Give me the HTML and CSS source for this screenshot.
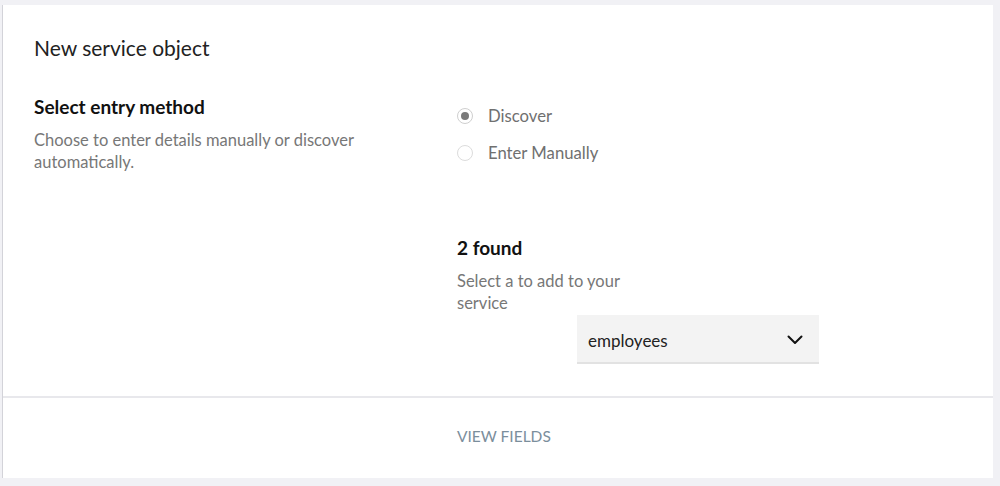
FILE: index.html
```html
<!DOCTYPE html>
<html>
<head>
<meta charset="utf-8">
<link rel="stylesheet" href="styles.css">
</head>
<body>
<div class="page">
  <div class="card">
    <div class="main">
      <h1 class="title">New service object</h1>
      <div class="grid">
        <div class="left">
          <h2 class="heading">Select entry method</h2>
          <p class="desc">Choose to enter details manually or discover automatically.</p>
        </div>
        <div class="right">
          <div class="radios">
            <label class="radio"><span class="dot checked"></span><span class="rlabel">Discover</span></label>
            <label class="radio"><span class="dot"></span><span class="rlabel">Enter Manually</span></label>
          </div>
          <h2 class="heading found">2 found</h2>
          <p class="desc narrow">Select a to add to your service</p>
          <div class="select">
            <span class="value">employees</span>
            <svg class="chev" width="16" height="10" viewBox="0 0 16 10"><path d="M1.5 1.5 L8 8 L14.5 1.5" fill="none" stroke="#111" stroke-width="2" stroke-linecap="round" stroke-linejoin="round"/></svg>
          </div>
        </div>
      </div>
    </div>
    <div class="footer">
      <span class="link">VIEW FIELDS</span>
    </div>
  </div>
</div>
</body>
</html>
```

FILE: styles.css
```css
html, body {
  margin: 0;
  padding: 0;
  background: #f1f1f5;
}
body {
  font-family: "Lato", "Liberation Sans", sans-serif;
  color: #222;
}
.page {
  padding: 5px 7px 8px 2px;
}
.card {
  background: #fff;
  border-left: 1px solid #d3d3d9;
  height: 473px;
  display: flex;
  flex-direction: column;
}
.main {
  padding: 31px 31px 0 31px;
  height: 360px;
  border-bottom: 2px solid #e8e8ec;
}
.title {
  margin: 0;
  font-size: 21px;
  line-height: 24px;
  font-weight: 400;
  color: #222;
}
.grid {
  display: grid;
  grid-template-columns: 423px 1fr;
  margin-top: 36px;
}
.heading {
  margin: 0;
  font-size: 19px;
  line-height: 22px;
  font-weight: 700;
  color: #111;
}
.desc {
  margin: 11px 0 0 0;
  font-size: 16.5px;
  line-height: 22px;
  color: #777;
  width: 340px;
}
.desc.narrow {
  width: 190px;
}
.radios {
  padding-top: 8px;
  display: flex;
  flex-direction: column;
  gap: 13px;
}
.radio {
  display: flex;
  align-items: center;
  height: 24px;
  gap: 15px;
}
.dot {
  width: 16px;
  height: 16px;
  box-sizing: border-box;
  border: 1px solid #dcdcdc;
  border-radius: 50%;
  display: flex;
  align-items: center;
  justify-content: center;
}
.dot.checked {
  border-color: #cfcfcf;
}
.dot.checked::after {
  content: "";
  width: 8px;
  height: 8px;
  border-radius: 50%;
  background: #7a7a7a;
}
.rlabel {
  font-size: 16.7px;
  color: #707070;
}
.found {
  margin-top: 72px;
}
.select {
  margin: 1px 0 0 120px;
  width: 242px;
  height: 49px;
  box-sizing: border-box;
  background: #f3f3f3;
  border-bottom: 2px solid #e2e2e2;
  display: flex;
  align-items: center;
  justify-content: space-between;
  padding: 3px 16px 0 11px;
}
.value {
  font-size: 17px;
  color: #222;
}
.footer {
  flex: 1;
  display: flex;
  align-items: center;
  padding-left: 454px;
  padding-bottom: 5px;
}
.link {
  font-size: 15.5px;
  color: #7b8e9c;
  letter-spacing: 0;
}
```
